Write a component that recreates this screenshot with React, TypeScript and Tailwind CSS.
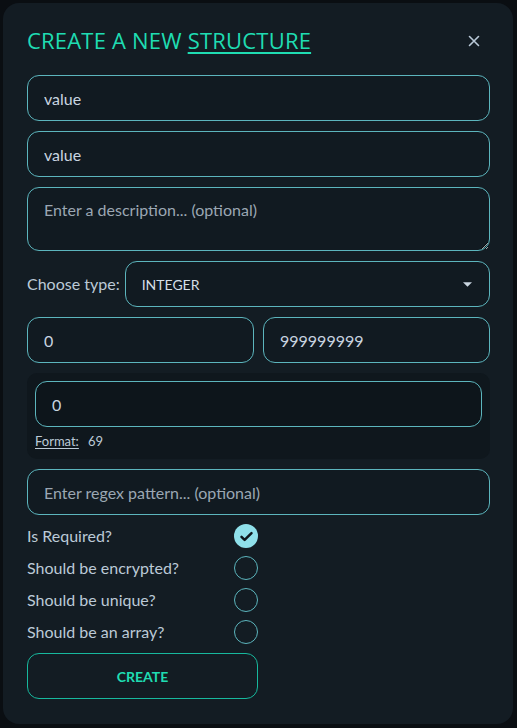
import React from "react";

const inputCls =
  "h-[46px] w-full rounded-[12px] border-[1.5px] border-[#5cb5bd] bg-[#111a21] px-[16px] text-[16px] text-[#c9d5e0] outline-none placeholder:text-[#9ba7b3]";

function Circle({ checked }: { checked?: boolean }) {
  if (checked) {
    return (
      <div className="flex h-[24px] w-[24px] items-center justify-center rounded-full bg-[#8fe0ea]">
        <svg width="15" height="15" viewBox="0 0 24 24" fill="none">
          <path d="M4 12.5l5 5L20 6.5" stroke="#0f171d" strokeWidth="4" strokeLinecap="round" strokeLinejoin="round" />
        </svg>
      </div>
    );
  }
  return <div className="h-[24px] w-[24px] rounded-full border-[1.5px] border-[#5cb5bd]" />;
}

export default function App() {
  const font = { fontFamily: "Lato, 'Noto Sans', sans-serif" };
  return (
    <div className="h-[728px] w-[517px] bg-[#0a0e12] p-[3px]" style={font}>
      <div className="flex h-[721px] w-[510px] flex-col rounded-[16px] bg-[#131c23] pl-[24px] pr-[23px] pt-[23px]">
        <div className="flex items-center justify-between pr-[10px]">
          <h1
            className="text-[22px] font-normal leading-[28px] tracking-[0.2px] text-[#1fdcb2]"
            style={{ fontFamily: "'Open Sans', sans-serif" }}
          >
            CREATE A NEW <span className="underline underline-offset-[3px] decoration-[1.5px]">STRUCTURE</span>
          </h1>
          <svg width="12" height="12" viewBox="0 0 12 12" className="mt-[2px]">
            <path d="M1.5 1.5l9 9M10.5 1.5l-9 9" stroke="#b9c9d8" strokeWidth="1.6" strokeLinecap="round" />
          </svg>
        </div>

        <div className="mt-[21px] flex flex-col gap-[10px]">
          <input className={inputCls} defaultValue="value" />
          <input className={inputCls} defaultValue="value" />
          <textarea
            className="h-[64px] w-full resize-y rounded-[12px] border-[1.5px] border-[#5cb5bd] bg-[#111a21] px-[16px] pt-[10px] text-[16px] text-[#c9d5e0] outline-none placeholder:text-[#9ba7b3]"
            placeholder="Enter a description... (optional)"
          />
          <div className="flex items-center gap-[5px]">
            <span className="shrink-0 text-[16px] text-[#bccad7]">Choose type:</span>
            <div className="flex h-[46px] flex-1 items-center justify-between rounded-[12px] border-[1.5px] border-[#5cb5bd] bg-[#111a21] pl-[16px] pr-[17px]">
              <span className="text-[14px] text-[#d5dfe8]">INTEGER</span>
              <svg width="9" height="5" viewBox="0 0 10 5">
                <path d="M0 0h10L5 5z" fill="#c9d5e0" />
              </svg>
            </div>
          </div>
          <div className="flex gap-[9px]">
            <input className={inputCls} defaultValue="0" />
            <input className={inputCls} defaultValue="999999999" />
          </div>
          <div className="flex flex-col rounded-[10px] bg-[#0f171d] px-[8px] pb-[9px] pt-[8px]">
            <input
              className="h-[46px] w-full rounded-[12px] border-[1.5px] border-[#5cb5bd] bg-[#0d151b] px-[16px] text-[16px] text-[#c9d5e0] outline-none"
              defaultValue="0"
            />
            <div className="mt-[5px] flex gap-[9px] text-[13px] leading-[18px] text-[#bccad7]">
              <span className="underline underline-offset-2">Format:</span>
              <span>69</span>
            </div>
          </div>
          <input className={inputCls} placeholder="Enter regex pattern... (optional)" />
          <div className="mt-[-1px] flex w-[231px] flex-col gap-[8px]">
            {[
              ["Is Required?", true],
              ["Should be encrypted?", false],
              ["Should be unique?", false],
              ["Should be an array?", false],
            ].map(([label, c]) => (
              <div key={label as string} className="flex h-[24px] items-center justify-between">
                <span className="text-[16px] text-[#bccad7]">{label as string}</span>
                <Circle checked={c as boolean} />
              </div>
            ))}
          </div>
          <button className="mt-[-1px] flex h-[46px] w-[231px] items-center justify-center rounded-[12px] border-[1.5px] border-[#17b89d] text-[14px] font-bold text-[#1fdcb2]">
            CREATE
          </button>
        </div>
      </div>
    </div>
  );
}
